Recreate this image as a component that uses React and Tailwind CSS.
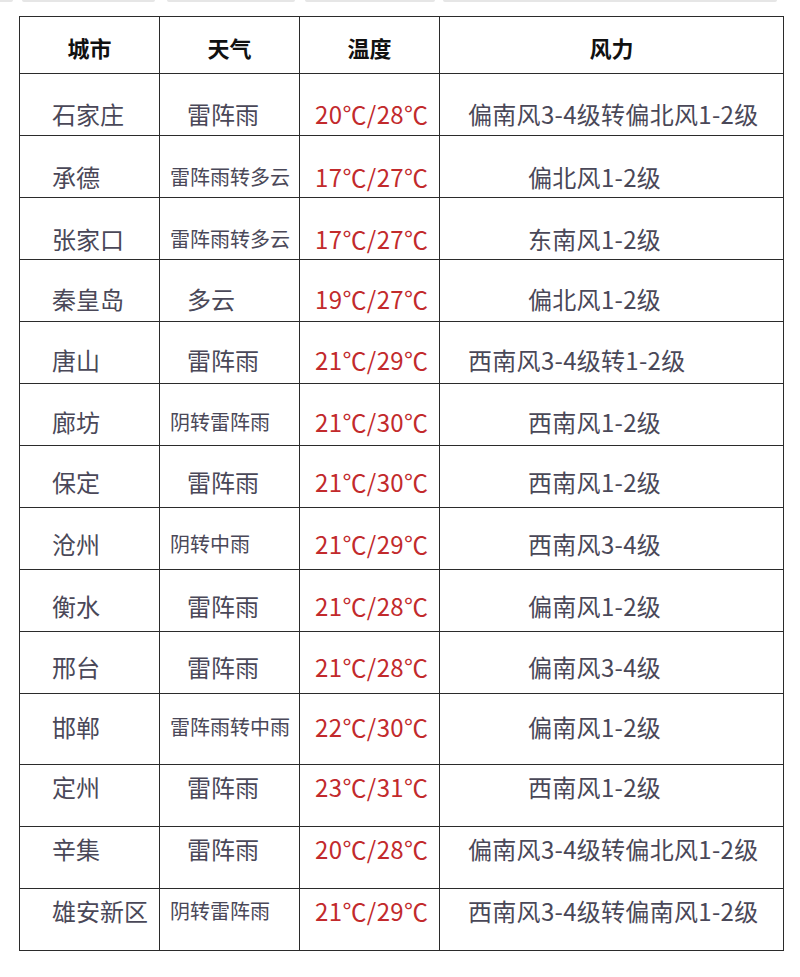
import React from "react";

const rows = [
  { city: "石家庄", wx: "雷阵雨", t: "20℃/28℃", wind: "偏南风3-4级转偏北风1-2级", pt: "pt-[28px]", h: "h-[62px]" },
  { city: "承德", wx: "雷阵雨转多云", t: "17℃/27℃", wind: "偏北风1-2级", pt: "pt-[29px]", h: "h-[62px]" },
  { city: "张家口", wx: "雷阵雨转多云", t: "17℃/27℃", wind: "东南风1-2级", pt: "pt-[29px]", h: "h-[62px]" },
  { city: "秦皇岛", wx: "多云", t: "19℃/27℃", wind: "偏北风1-2级", pt: "pt-[27px]", h: "h-[62px]" },
  { city: "唐山", wx: "雷阵雨", t: "21℃/29℃", wind: "西南风3-4级转1-2级", pt: "pt-[26px]", h: "h-[62px]" },
  { city: "廊坊", wx: "阴转雷阵雨", t: "21℃/30℃", wind: "西南风1-2级", pt: "pt-[26px]", h: "h-[62px]" },
  { city: "保定", wx: "雷阵雨", t: "21℃/30℃", wind: "西南风1-2级", pt: "pt-[24px]", h: "h-[62px]" },
  { city: "沧州", wx: "阴转中雨", t: "21℃/29℃", wind: "西南风3-4级", pt: "pt-[24px]", h: "h-[62px]" },
  { city: "衡水", wx: "雷阵雨", t: "21℃/28℃", wind: "偏南风1-2级", pt: "pt-[24px]", h: "h-[62px]" },
  { city: "邢台", wx: "雷阵雨", t: "21℃/28℃", wind: "偏南风3-4级", pt: "pt-[23px]", h: "h-[62px]" },
  { city: "邯郸", wx: "雷阵雨转中雨", t: "22℃/30℃", wind: "偏南风1-2级", pt: "pt-[21px]", h: "h-[71px]" },
  { city: "定州", wx: "雷阵雨", t: "23℃/31℃", wind: "西南风1-2级", pt: "pt-[10px]", h: "h-[62px]" },
  { city: "辛集", wx: "雷阵雨", t: "20℃/28℃", wind: "偏南风3-4级转偏北风1-2级", pt: "pt-[10px]", h: "h-[62px]" },
  { city: "雄安新区", wx: "阴转雷阵雨", t: "21℃/29℃", wind: "西南风3-4级转偏南风1-2级", pt: "pt-[10px]", h: "h-[62px]" },
];

const font = { fontFamily: '"Noto Sans CJK SC", "Noto Sans", sans-serif' };

export default function App() {
  return (
    <div className="w-[800px] h-[977px] bg-white relative overflow-hidden" style={font}>
      <div className="flex h-[3px]">
        <div className="w-[13px] h-[2px] bg-[#e6e6e6] rounded-br-full" />
        <div className="ml-[9px] w-[133px] h-[2px] bg-[#e6e6e6] rounded-b-full" />
        <div className="ml-[12px] w-[128px] h-[2px] bg-[#e6e6e6] rounded-b-full" />
        <div className="ml-[10px] w-[130px] h-[2px] bg-[#e6e6e6] rounded-b-full" />
        <div className="ml-[8px] w-[334px] h-[2px] bg-[#e6e6e6] rounded-b-full" />
      </div>
      <div className="ml-[19px] mt-[13px] w-[765px] border-b border-[#2b2b2b]">
        <div className="grid grid-cols-[140px_140px_140px_345px] h-[57px]">
          {["城市", "天气", "温度", "风力"].map((h, i) => (
            <div
              key={h}
              className={`border-t border-l border-[#2b2b2b] flex items-center justify-center pt-[3px] text-[22px] leading-none font-semibold text-[#111] ${i === 3 ? "border-r" : ""}`}
            >
              {h}
            </div>
          ))}
        </div>
        {rows.map((r) => {
          const small = r.wx.length > 3;
          const long = r.wind.length > 9;
          return (
            <div key={r.city} className={`grid grid-cols-[140px_140px_140px_345px] ${r.h}`}>
              <div className={`border-t border-l border-[#2b2b2b] ${r.pt} pl-[32px]`}>
                <span className="block text-[24px] leading-[24px] text-[#4a4858] whitespace-nowrap">{r.city}</span>
              </div>
              <div className={`border-t border-l border-[#2b2b2b] ${r.pt} ${small ? "pl-[10px]" : "pl-[27px]"}`}>
                <span className={`block leading-[24px] text-[#4a4858] whitespace-nowrap ${small ? "text-[20px]" : "text-[24px]"}`}>{r.wx}</span>
              </div>
              <div className={`border-t border-l border-[#2b2b2b] ${r.pt} pl-[15px]`}>
                <span className="block text-[24px] leading-[24px] text-[#c22a2c] whitespace-nowrap tracking-[0.4px]">{r.t}</span>
              </div>
              <div className={`border-t border-l border-r border-[#2b2b2b] ${r.pt} ${long ? "pl-[28px]" : "pl-[88px]"}`}>
                <span className="block text-[24px] leading-[24px] text-[#4a4858] whitespace-nowrap tracking-[0.3px]">{r.wind}</span>
              </div>
            </div>
          );
        })}
      </div>
    </div>
  );
}
